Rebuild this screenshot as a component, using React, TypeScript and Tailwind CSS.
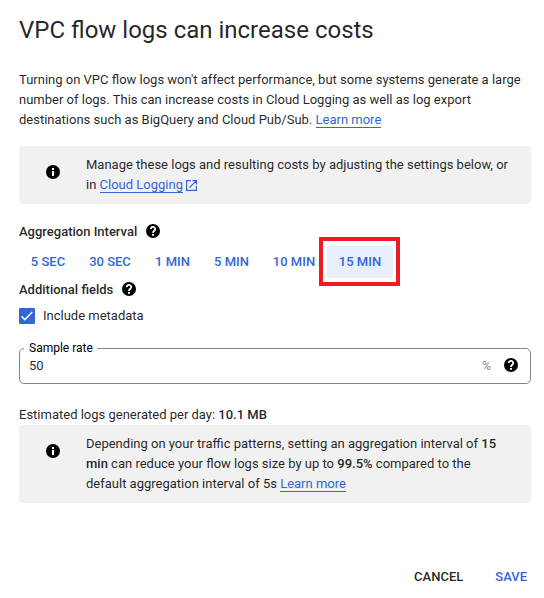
import React from 'react';

function Help({ className = '' }: { className?: string }) {
  return (
    <svg viewBox="0 0 14 14" className={'size-[14px] shrink-0 fill-none ' + className}>
      <circle cx="7" cy="7" r="7" className="fill-black" />
      <path d="M4.8 5.2a2.2 2.2 0 1 1 3.6 1.5C7.5 7.4 7 7.7 7 8.9" className="stroke-white stroke-[1.8]" />
      <path d="M6 10h2v1.8H6z" className="fill-white" />
    </svg>
  );
}

function Info({ className = '' }: { className?: string }) {
  return (
    <svg viewBox="0 0 14 14" className={'ml-[27px] mr-[26px] size-[14px] shrink-0 fill-black ' + className}>
      <circle cx="7" cy="7" r="7" />
      <path d="M6 3h2v2H6zM6 6h2v5H6z" className="fill-white" />
    </svg>
  );
}

function External() {
  return (
    <svg viewBox="0 0 11 11" className="inline size-[11px] fill-none stroke-[#3367d6] align-[-2px]">
      <path d="M5 .6H.6v9.8h9.8V6M6.5.6h3.9v3.9M10.2.8L3.5 7.5" className="stroke-[1.2]" />
    </svg>
  );
}

const link = 'border-b border-[#3367d6] text-[#3367d6]';

const intervals = [
  { label: '5 SEC', width: 'w-[58px]' },
  { label: '30 SEC', width: 'w-[66px]' },
  { label: '1 MIN', width: 'w-[59px]' },
  { label: '5 MIN', width: 'w-[59px]' },
  { label: '10 MIN', width: 'w-[66px]' },
];

export default function App() {
  return (
    <main className="h-[598px] w-[544px] overflow-hidden bg-white pl-[19px] pr-[13px] font-['Roboto',sans-serif] text-[13px] leading-5 text-black/87">
      <h1 className="pt-[14px] text-[24px] leading-8">VPC flow logs can increase costs</h1>
      <p className="mt-[24px] whitespace-nowrap">
        Turning on VPC flow logs won't affect performance, but some systems generate a large<br />
        number of logs. This can increase costs in Cloud Logging as well as log export<br />
        destinations such as BigQuery and Cloud Pub/Sub. <a className={link}>Learn more</a>
      </p>
      <section className="mt-4 flex h-[58px] items-start rounded bg-[#f1f1f1] pt-[9px]">
        <Info className="mt-[10px]" />
        <p className="whitespace-nowrap">
          Manage these logs and resulting costs by adjusting the settings below, or<br />
          in <a className={link}>Cloud Logging</a> <External />
        </p>
      </section>
      <div className="mt-[18px] flex h-5 items-center font-medium">Aggregation Interval<Help className="mb-[2px] ml-[9px]" /></div>
      <div className="flex h-[38px] items-center pt-[2px] font-medium text-[#3367d6]">
        {intervals.map((i) => (
          <button key={i.label} className={'h-8 shrink-0 text-center ' + i.width}>{i.label}</button>
        ))}
        <div className="-mb-1.5 -ml-2 -mt-2 flex h-[49px] w-[81px] shrink-0 items-start border-4 border-[#ed1c24] pl-1 pt-[5px]">
          <button className="h-8 w-[66px] rounded-[2px] bg-[#e8eefa]">15 MIN</button>
        </div>
      </div>
      <div className="flex h-5 items-center font-medium">Additional fields<Help className="mb-[2px] ml-[9px]" /></div>
      <label className="mt-[6px] flex h-5 items-center">
        <span className="mr-2 flex size-4 items-center justify-center rounded-[1px] bg-[#3367d6]">
          <svg viewBox="0 0 16 16" className="size-4 fill-none stroke-white stroke-[1.5]"><path d="M2.5 8.3l3.3 3.3L13.3 4" /></svg>
        </span>
        Include metadata
      </label>
      <div className="relative mt-[22px] flex h-[36px] items-center rounded-[5px] border border-[#80868b] px-[9px]">
        <span className="absolute left-[4px] top-[-9px] bg-white pl-[5px] pr-1 text-[12px] leading-4 text-black">Sample rate</span>
        <span>50</span>
        <span className="ml-auto mr-[13px] text-[12px] text-[#888]">%</span>
        <Help className="mb-[2px] mr-[3px]" />
      </div>
      <p className="mt-[21px]">Estimated logs generated per day: <b className="font-medium">10.1 MB</b></p>
      <section className="flex h-[78px] items-start rounded bg-[#f1f1f1] pt-[9px]">
        <Info className="mt-[10px]" />
        <p className="whitespace-nowrap">
          Depending on your traffic patterns, setting an aggregation interval of <b className="font-medium">15</b><br />
          <b className="font-medium">min</b> can reduce your flow logs size by up to <b className="font-medium">99.5%</b> compared to the<br />
          default aggregation interval of 5s <a className={link}>Learn more</a>
        </p>
      </section>
      <footer className="mt-[64px] flex justify-end gap-8 pr-1 font-medium">
        <button>CANCEL</button>
        <button className="text-[#3367d6]">SAVE</button>
      </footer>
    </main>
  );
}
